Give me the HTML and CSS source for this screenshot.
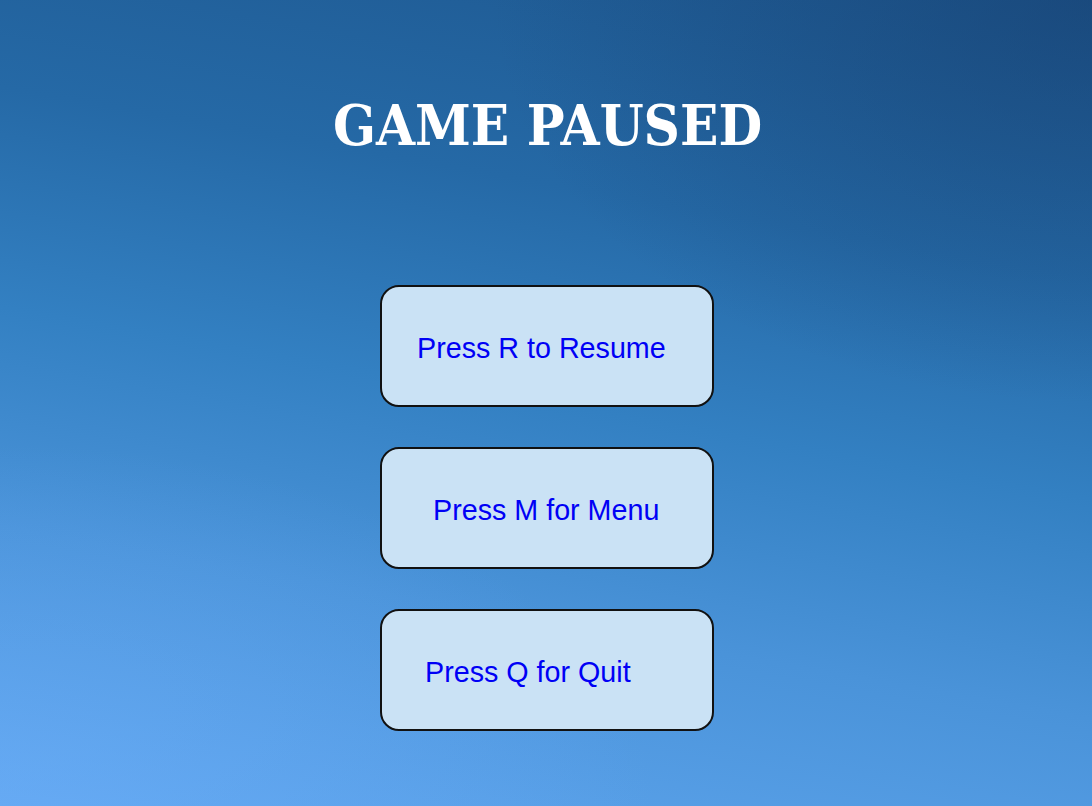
FILE: index.html
```html
<!DOCTYPE html>
<html lang="en">
<head>
<meta charset="utf-8">
<title>Game Paused</title>
<link rel="stylesheet" href="styles.css">
</head>
<body>
<main class="pause-screen">
  <h1 class="title">GAME PAUSED</h1>
  <div class="options">
    <div class="option option-resume">Press R to Resume</div>
    <div class="option option-menu">Press M for Menu</div>
    <div class="option option-quit">Press Q for Quit</div>
  </div>
</main>
</body>
</html>
```

FILE: styles.css
```css
html, body {
  margin: 0;
  padding: 0;
  height: 100%;
}

body {
  background:
    radial-gradient(ellipse 60% 45% at 0% 100%, rgba(110, 175, 250, 0.5), rgba(110, 175, 250, 0) 100%),
    radial-gradient(ellipse 55% 50% at 100% 0%, rgba(22, 62, 110, 0.55), rgba(22, 62, 110, 0) 100%),
    linear-gradient(10deg, #5ea5ee 0%, #4a93d9 28%, #3380c2 50%, #2569a6 72%, #1e5890 100%);
  overflow: hidden;
}

.pause-screen {
  display: flex;
  flex-direction: column;
  align-items: center;
  padding-top: 97px;
}

.title {
  margin: 0 0 132px;
  font-family: "DejaVu Serif", serif;
  font-stretch: condensed;
  font-weight: bold;
  font-size: 56px;
  line-height: 1;
  color: #ffffff;
  padding-left: 3px;
}

.options {
  display: flex;
  flex-direction: column;
  gap: 40px;
  padding-left: 2px;
}

.option {
  box-sizing: border-box;
  width: 334px;
  height: 122px;
  display: flex;
  align-items: center;
  padding-top: 4px;
  background: #cae2f5;
  border: 2px solid #111111;
  border-radius: 19px;
  font-family: "Liberation Sans", Arial, sans-serif;
  font-size: 28.7px;
  color: #0000f5;
}

.option-resume { padding-left: 35px; }
.option-menu { padding-left: 51px; }
.option-quit { padding-left: 43px; }
```
